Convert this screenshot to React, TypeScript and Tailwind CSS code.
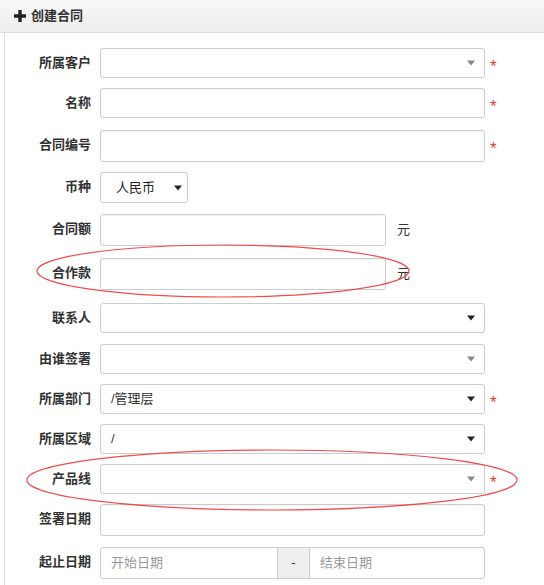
import React from "react";

const font = { fontFamily: '"Liberation Sans", "Noto Sans CJK SC", sans-serif' };

function Caret({ muted, tight }: { muted?: boolean; tight?: boolean }) {
  return (
    <span
      className={
        "absolute top-1/2 -translate-y-1/2 h-0 w-0 border-x-[4px] border-t-[5px] border-x-transparent " +
        (tight ? "right-[5px] " : "right-[9px] ") +
        (muted ? "border-t-[#888]" : "border-t-[#222]")
      }
    />
  );
}

function Star() {
  return <span className="ml-[5px] text-[17px] leading-none text-[#e4393c] pt-[10px]">*</span>;
}

function Field({ value, placeholder, h = 32 }: { value?: string; placeholder?: string; h?: number }) {
  return (
    <div
      className={
        "flex-1 flex items-center rounded-[3px] border border-[#ccc] bg-white px-[10px] text-[13px] text-[#333] shadow-[inset_0_1px_1px_rgba(0,0,0,0.05)] " +
        (h === 30 ? "h-[30px]" : "h-[32px]")
      }
    >
      {value ? value : <span className="text-[#999]">{placeholder}</span>}
    </div>
  );
}

function Select({ value, muted }: { value?: string; muted?: boolean }) {
  return (
    <div className="relative flex-1 flex items-center h-[30px] rounded-[3px] border border-[#ccc] bg-white pl-[10px] text-[13px] text-[#333]">
      {value}
      <Caret muted={muted} />
    </div>
  );
}

function Row({ label, children }: { label: string; children: React.ReactNode }) {
  return (
    <>
      <div className="w-[91px] shrink-0 h-[30px] flex items-center justify-end text-[13px] font-bold text-[#333]">
        {label}
      </div>
      <div className="ml-[9px] flex items-start w-[385px]">{children}</div>
    </>
  );
}

function Yuan() {
  return (
    <div className="flex items-center w-full">
      <div className="w-[286px] flex">
        <Field />
      </div>
      <span className="ml-[11px] text-[13px] text-[#333]">元</span>
    </div>
  );
}

export default function App() {
  return (
    <div className="relative w-[544px] h-[585px] overflow-hidden bg-white" style={font}>
      <div className="h-[33px] flex items-center gap-[5px] pl-[14px] border-b border-[#ddd] bg-gradient-to-b from-[#f8f8f8] to-[#ececec] text-[13px] font-bold text-[#333]">
        <svg width="12" height="12" viewBox="0 0 12 12">
          <path d="M4.3 0h3.4v4.3H12v3.4H7.7V12H4.3V7.7H0V4.3h4.3z" fill="#222" />
        </svg>
        <span>创建合同</span>
      </div>

      <div className="ml-[4px] border-l border-[#ddd] h-[552px] pt-[15px]">
        <div className="flex flex-col -ml-[5px]">
          <div className="flex items-start h-[40px]">
            <Row label="所属客户">
              <Select muted />
            </Row>
            <Star />
          </div>
          <div className="flex items-start h-[42px]">
            <Row label="名称">
              <Field h={30} />
            </Row>
            <Star />
          </div>
          <div className="flex items-start h-[42px]">
            <Row label="合同编号">
              <Field />
            </Row>
            <Star />
          </div>
          <div className="flex items-start h-[42px]">
            <Row label="币种">
              <div className="relative w-[88px] h-[31px] flex items-center rounded-[3px] border border-[#ccc] bg-white pl-[15px] text-[13px] text-[#222]">
                人民币
                <Caret tight />
              </div>
            </Row>
          </div>
          <div className="flex items-start h-[44px]">
            <Row label="合同额">
              <Yuan />
            </Row>
          </div>
          <div className="flex items-start h-[45px]">
            <Row label="合作款">
              <Yuan />
            </Row>
          </div>
          <div className="flex items-start h-[41px]">
            <Row label="联系人">
              <Select />
            </Row>
          </div>
          <div className="flex items-start h-[40px]">
            <Row label="由谁签署">
              <Select muted />
            </Row>
          </div>
          <div className="flex items-start h-[40px]">
            <Row label="所属部门">
              <Select value="/管理层" />
            </Row>
            <Star />
          </div>
          <div className="flex items-start h-[40px]">
            <Row label="所属区域">
              <Select value="/" />
            </Row>
          </div>
          <div className="flex items-start h-[40px]">
            <Row label="产品线">
              <Select muted />
            </Row>
            <Star />
          </div>
          <div className="flex items-start h-[43px]">
            <Row label="签署日期">
              <Field />
            </Row>
          </div>
          <div className="flex items-start h-[40px]">
            <Row label="起止日期">
              <div className="flex w-full h-[32px] text-[13px]">
                <div className="w-[178px] flex items-center rounded-l-[3px] border border-[#ccc] px-[10px] text-[#999]">开始日期</div>
                <div className="w-[31px] flex items-center justify-center border-y border-[#ccc] bg-[#eee] text-[#333]">-</div>
                <div className="flex-1 flex items-center rounded-r-[3px] border border-[#ccc] px-[10px] text-[#999]">结束日期</div>
              </div>
            </Row>
          </div>
        </div>
      </div>

      <svg className="pointer-events-none absolute left-0 top-0" width="544" height="585">
        <ellipse cx="223" cy="271" rx="186" ry="26" fill="none" stroke="#f24b4b" strokeWidth="1.2" />
        <ellipse cx="272" cy="480" rx="245" ry="30" fill="none" stroke="#f24b4b" strokeWidth="1.2" />
      </svg>
    </div>
  );
}
